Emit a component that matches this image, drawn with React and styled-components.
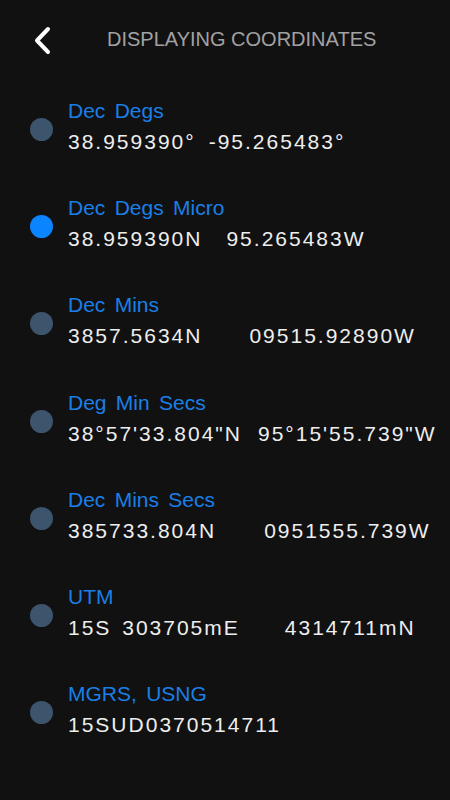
import React from 'react';
import styled, { createGlobalStyle } from 'styled-components';

const GlobalStyle = createGlobalStyle`
  html, body {
    margin: 0;
    padding: 0;
    background: #111111;
  }
  body {
    font-family: "Liberation Sans", Arial, sans-serif;
  }
`;

const Screen = styled.div`
  width: 450px;
  min-height: 800px;
  background: #111111;
  display: flex;
  flex-direction: column;
`;

const Header = styled.header`
  height: 78px;
  display: flex;
  align-items: center;
  padding-left: 33px;
`;

const BackButton = styled.button`
  width: 20px;
  height: 30px;
  padding: 0;
  border: none;
  background: none;
  display: flex;
  align-items: center;
  justify-content: center;
  margin-top: 3px;
  cursor: pointer;
`;

const Title = styled.h1`
  margin: 0 0 0 54px;
  font-size: 20px;
  line-height: 24px;
  font-weight: 400;
  color: #a2a2a2;
`;

const List = styled.ul`
  list-style: none;
  margin: 0;
  padding: 0;
`;

const Row = styled.li`
  height: 97.2px;
  display: flex;
  align-items: center;
  padding-left: 30px;
`;

const Radio = styled.span`
  width: 23px;
  height: 23px;
  border-radius: 50%;
  flex: none;
  margin-top: 6px;
  background: ${p => (p.active ? '#0a84ff' : '#3d546d')};
`;

const Text = styled.div`
  margin-left: 15px;
  display: flex;
  flex-direction: column;
`;

const Label = styled.span`
  font-size: 21px;
  line-height: 24px;
  color: #1a7fe6;
  word-spacing: 3.5px;
`;

const Value = styled.div`
  margin-top: 7px;
  display: flex;
  gap: ${p => p.gap}px;
  font-size: 21px;
  line-height: 24px;
  color: #eeeeee;
  letter-spacing: 2px;
  word-spacing: 3px;
  white-space: pre;
`;

const formats = [
  { label: 'Dec Degs', parts: ['38.959390°', '-95.265483°'], gap: 13 },
  { label: 'Dec Degs Micro', parts: ['38.959390N', '95.265483W'], gap: 24, active: true },
  { label: 'Dec Mins', parts: ['3857.5634N', '09515.92890W'], gap: 47 },
  { label: 'Deg Min Secs', parts: ['38°57\'33.804"N', '95°15\'55.739"W'], gap: 16 },
  { label: 'Dec Mins Secs', parts: ['385733.804N', '0951555.739W'], gap: 48 },
  { label: 'UTM', parts: ['15S 303705mE', '4314711mN'], gap: 45 },
  { label: 'MGRS, USNG', parts: ['15SUD0370514711'], gap: 0 },
];

function Chevron() {
  return (
    <svg width="20" height="30" viewBox="0 0 20 30">
      <path
        d="M15 3 L4 14.5 L15 26"
        fill="none"
        stroke="#ffffff"
        strokeWidth="4"
        strokeLinecap="round"
        strokeLinejoin="round"
      />
    </svg>
  );
}

export default function App() {
  return (
    <Screen>
      <GlobalStyle />
      <Header>
        <BackButton aria-label="Back">
          <Chevron />
        </BackButton>
        <Title>DISPLAYING COORDINATES</Title>
      </Header>
      <List>
        {formats.map(f => (
          <Row key={f.label}>
            <Radio active={f.active} />
            <Text>
              <Label>{f.label}</Label>
              <Value gap={f.gap}>
                {f.parts.map(part => (
                  <span key={part}>{part}</span>
                ))}
              </Value>
            </Text>
          </Row>
        ))}
      </List>
    </Screen>
  );
}
